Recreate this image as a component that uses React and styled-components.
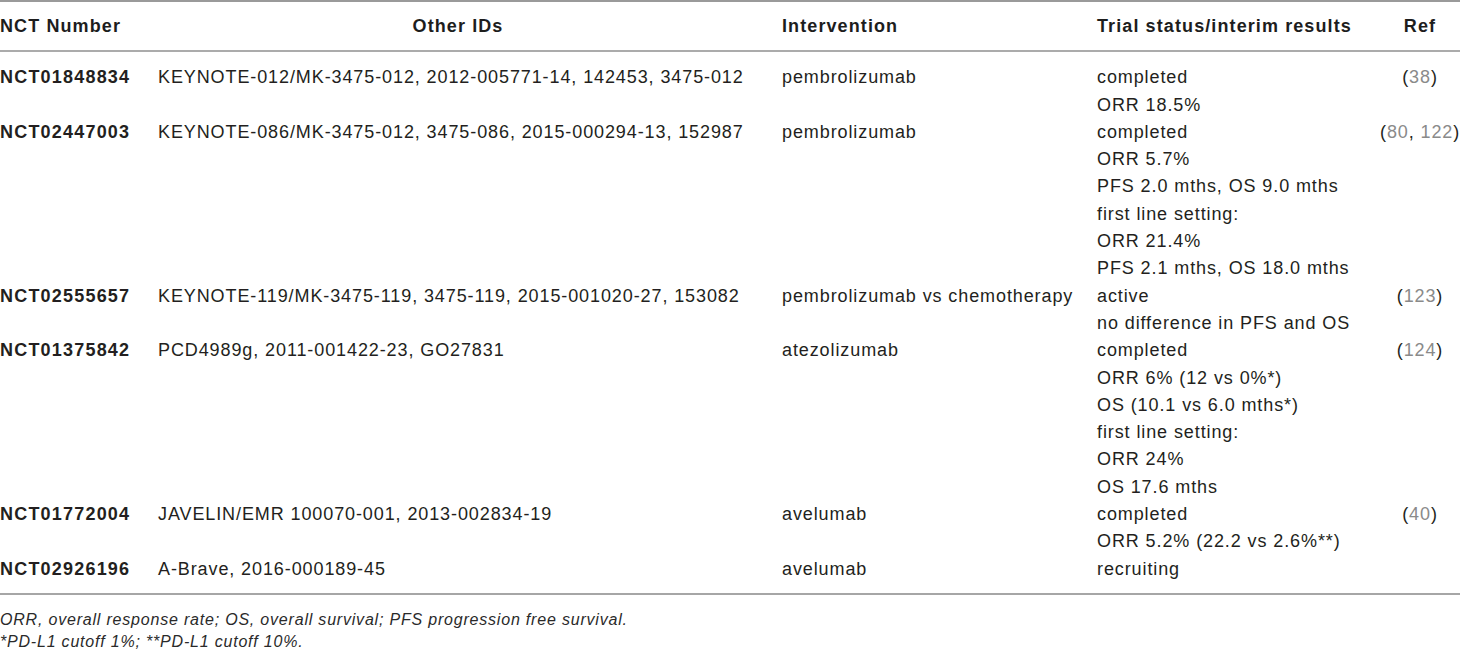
import React from 'react';
import styled, { createGlobalStyle } from 'styled-components';

const GlobalStyle = createGlobalStyle`
  html, body {
    margin: 0;
    padding: 0;
    background: #ffffff;
  }
  body {
    font-family: "Liberation Sans", Arial, sans-serif;
    color: #231f20;
  }
`;

const Page = styled.div`
  width: 1460px;
  overflow: hidden;
`;

const Table = styled.table`
  width: 1460px;
  table-layout: fixed;
  border-collapse: collapse;
  border-top: 2px solid #9a9a9a;
  border-bottom: 2px solid #a6a6a6;
  font-size: 18px;
  letter-spacing: 0.9px;
  line-height: 27.3px;
`;

const HeadCell = styled.th`
  padding: 11px ${(p) => p.$padRight || 0}px 10px 0;
  text-align: ${(p) => p.$align || 'left'};
  font-weight: 700;
  color: #1d1d1d;
  border-bottom: 2px solid #ababab;
  white-space: nowrap;
  letter-spacing: 1.1px;
`;

const Body = styled.tbody`
  tr:first-child td {
    padding-top: 12px;
  }
  tr:last-child td {
    padding-bottom: 10px;
  }
`;

const Cell = styled.td`
  padding: 0;
  vertical-align: top;
  text-align: ${(p) => p.$align || 'left'};
  white-space: nowrap;
  font-weight: ${(p) => (p.$bold ? 700 : 400)};
  letter-spacing: ${(p) => (p.$bold ? '1.2px' : '0.9px')};
`;

const Line = styled.div`
  display: block;
`;

const RefNum = styled.span`
  color: #8a8a8a;
`;

const Notes = styled.div`
  margin-top: 14px;
  font-size: 16px;
  letter-spacing: 0.8px;
  line-height: 22px;
  font-style: italic;
  color: #2a2a2a;
`;

const trials = [
  {
    nct: 'NCT01848834',
    ids: 'KEYNOTE-012/MK-3475-012, 2012-005771-14, 142453, 3475-012',
    intervention: 'pembrolizumab',
    status: ['completed', 'ORR 18.5%'],
    refs: [38],
  },
  {
    nct: 'NCT02447003',
    ids: 'KEYNOTE-086/MK-3475-012, 3475-086, 2015-000294-13, 152987',
    intervention: 'pembrolizumab',
    status: [
      'completed',
      'ORR 5.7%',
      'PFS 2.0 mths, OS 9.0 mths',
      'first line setting:',
      'ORR 21.4%',
      'PFS 2.1 mths, OS 18.0 mths',
    ],
    refs: [80, 122],
  },
  {
    nct: 'NCT02555657',
    ids: 'KEYNOTE-119/MK-3475-119, 3475-119, 2015-001020-27, 153082',
    intervention: 'pembrolizumab vs chemotherapy',
    status: ['active', 'no difference in PFS and OS'],
    refs: [123],
  },
  {
    nct: 'NCT01375842',
    ids: 'PCD4989g, 2011-001422-23, GO27831',
    intervention: 'atezolizumab',
    status: [
      'completed',
      'ORR 6% (12 vs 0%*)',
      'OS (10.1 vs 6.0 mths*)',
      'first line setting:',
      'ORR 24%',
      'OS 17.6 mths',
    ],
    refs: [124],
  },
  {
    nct: 'NCT01772004',
    ids: 'JAVELIN/EMR 100070-001, 2013-002834-19',
    intervention: 'avelumab',
    status: ['completed', 'ORR 5.2% (22.2 vs 2.6%**)'],
    refs: [40],
  },
  {
    nct: 'NCT02926196',
    ids: 'A-Brave, 2016-000189-45',
    intervention: 'avelumab',
    status: ['recruiting'],
    refs: [],
  },
];

const RefList = ({ refs }) => {
  if (!refs.length) return null;
  return (
    <>
      (
      {refs.map((r, i) => (
        <React.Fragment key={r}>
          {i > 0 && ', '}
          <RefNum>{r}</RefNum>
        </React.Fragment>
      ))}
      )
    </>
  );
};

const App = () => {
  return (
    <Page>
      <GlobalStyle />
      <Table>
        <colgroup>
          <col style={{ width: 158 }} />
          <col style={{ width: 624 }} />
          <col style={{ width: 315 }} />
          <col style={{ width: 283 }} />
          <col style={{ width: 80 }} />
        </colgroup>
        <thead>
          <tr>
            <HeadCell>NCT Number</HeadCell>
            <HeadCell $align="center" $padRight={24}>
              Other IDs
            </HeadCell>
            <HeadCell>Intervention</HeadCell>
            <HeadCell>Trial status/interim results</HeadCell>
            <HeadCell $align="center">Ref</HeadCell>
          </tr>
        </thead>
        <Body>
          {trials.map((t) => (
            <tr key={t.nct}>
              <Cell $bold>{t.nct}</Cell>
              <Cell>{t.ids}</Cell>
              <Cell>{t.intervention}</Cell>
              <Cell>
                {t.status.map((s, i) => (
                  <Line key={i}>{s}</Line>
                ))}
              </Cell>
              <Cell $align="center">
                <RefList refs={t.refs} />
              </Cell>
            </tr>
          ))}
        </Body>
      </Table>
      <Notes>
        <Line>ORR, overall response rate; OS, overall survival; PFS progression free survival.</Line>
        <Line>*PD-L1 cutoff 1%; **PD-L1 cutoff 10%.</Line>
      </Notes>
    </Page>
  );
};

export default App;
